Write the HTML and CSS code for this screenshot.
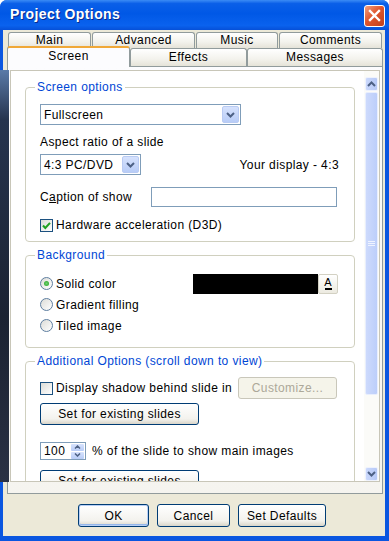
FILE: index.html
```html
<!DOCTYPE html>
<html>
<head>
<meta charset="utf-8">
<title>Project Options</title>
<link rel="stylesheet" href="styles.css">
</head>
<body>
<div class="window">
    <div class="titlebar">
        <span class="title">Project Options</span>
        <span class="close">
            <svg width="13" height="13" viewBox="0 0 13 13"><path d="M2 2 L11 11 M11 2 L2 11" stroke="#fff" stroke-width="2.4" stroke-linecap="square"/></svg>
        </span>
    </div>
    <div class="client">
        <div class="tabrow back">
            <div class="tab w-main">Main</div>
            <div class="tab w-adv">Advanced</div>
            <div class="tab w-music">Music</div>
            <div class="tab w-comm">Comments</div>
        </div>
        <div class="tabrow front">
            <div class="tab sel w-screen">Screen</div>
            <div class="tab w-eff">Effects</div>
            <div class="tab w-msg">Messages</div>
        </div>
        <div class="panel">
            <div class="scrollbox">
                <div class="scrollcontent">
                    <fieldset class="group">
                        <legend>Screen options</legend>
                        <div class="gbody g1">
                            <div class="combo wide">
                                <span class="ctext">Fullscreen</span>
                                <span class="dbtn"><svg width="9" height="6" viewBox="0 0 9 6"><path d="M1 1 L4.5 4.5 L8 1" fill="none" stroke="#4d6185" stroke-width="2"/></svg></span>
                            </div>
                            <div class="lbl aspect">Aspect ratio of a slide</div>
                            <div class="row between r-aspect">
                                <div class="combo narrow">
                                    <span class="ctext">4:3 PC/DVD</span>
                                    <span class="dbtn"><svg width="9" height="6" viewBox="0 0 9 6"><path d="M1 1 L4.5 4.5 L8 1" fill="none" stroke="#4d6185" stroke-width="2"/></svg></span>
                                </div>
                                <span>Your display - 4:3</span>
                            </div>
                            <div class="row r-caption">
                                <span class="caplbl">C<u>a</u>ption of show</span>
                                <span class="edit"></span>
                            </div>
                            <div class="row r-check">
                                <span class="check"><svg width="11" height="11" viewBox="0 0 11 11"><path d="M2 5.5 L4.3 8 L9 2.8" fill="none" stroke="#21a121" stroke-width="2"/></svg></span>
                                <span class="clabel">Hardware acceleration (D3D)</span>
                            </div>
                        </div>
                    </fieldset>

                    <fieldset class="group gap">
                        <legend>Background</legend>
                        <div class="gbody g2">
                            <div class="row between rrow">
                                <div class="row">
                                    <span class="radio on"></span>
                                    <span class="clabel">Solid color</span>
                                </div>
                                <div class="row picker">
                                    <span class="swatch"></span>
                                    <span class="abtn"><span class="aglyph">A</span><span class="abar"></span></span>
                                </div>
                            </div>
                            <div class="row rrow">
                                <span class="radio"></span>
                                <span class="clabel">Gradient filling</span>
                            </div>
                            <div class="row rrow">
                                <span class="radio"></span>
                                <span class="clabel">Tiled image</span>
                            </div>
                        </div>
                    </fieldset>

                    <fieldset class="group gap">
                        <legend>Additional Options (scroll down to view)</legend>
                        <div class="gbody g3">
                            <div class="row r-shadow">
                                <span class="check"></span>
                                <span class="clabel">Display shadow behind slide in</span>
                                <span class="btn disabled custom">Customize...</span>
                            </div>
                            <div class="btn setbtn first">Set for existing slides</div>
                            <div class="row r-spin">
                                <span class="spin">
                                    <span class="stext">100</span>
                                    <span class="sbtns">
                                        <span class="sb"><svg width="7" height="4" viewBox="0 0 7 4"><path d="M1 3.5 L3.5 1 L6 3.5" fill="none" stroke="#4d6185" stroke-width="1.5"/></svg></span>
                                        <span class="sb"><svg width="7" height="4" viewBox="0 0 7 4"><path d="M1 0.5 L3.5 3 L6 0.5" fill="none" stroke="#4d6185" stroke-width="1.5"/></svg></span>
                                    </span>
                                </span>
                                <span class="pct">% of the slide to show main images</span>
                            </div>
                            <div class="btn setbtn second">Set for existing slides</div>
                        </div>
                    </fieldset>
                </div>
                <div class="scrollbar">
                    <div class="sbtn"><svg width="9" height="6" viewBox="0 0 9 6"><path d="M1 5 L4.5 1.5 L8 5" fill="none" stroke="#4d6185" stroke-width="2"/></svg></div>
                    <div class="thumb">
                        <svg width="7" height="7" viewBox="0 0 7 7"><path d="M0 1.5 H7 M0 3.5 H7 M0 5.5 H7" stroke="#eef3ff" stroke-width="1"/></svg>
                    </div>
                    <div class="track"></div>
                    <div class="sbtn"><svg width="9" height="6" viewBox="0 0 9 6"><path d="M1 1 L4.5 4.5 L8 1" fill="none" stroke="#4d6185" stroke-width="2"/></svg></div>
                </div>
            </div>
        </div>
        <div class="buttons">
            <span class="btn default w-ok">OK</span>
            <span class="btn w-cancel">Cancel</span>
            <span class="btn w-def">Set Defaults</span>
        </div>
    </div>
</div>
</body>
</html>
```

FILE: styles.css
```css
body {
    margin: 0;
    font-family: "Liberation Sans", Arial, sans-serif;
    font-size: 12px;
    letter-spacing: 0.4px;
    color: #000;
    background: #fff;
}

.window {
    position: relative;
    width: 389px;
    height: 541px;
    display: flex;
    flex-direction: column;
    background: #0a56e0;
    border-radius: 7px 7px 0 0;
    overflow: hidden;
}

/* dark strip on the left edge of the shot */
.window::before {
    content: "";
    position: absolute;
    left: 0;
    top: 70px;
    width: 9px;
    height: 412px;
    background: linear-gradient(#5a7aa8, #26344f 12%, #1b2232 60%, #2a3144);
}

.titlebar {
    height: 30px;
    display: flex;
    align-items: center;
    justify-content: space-between;
    padding: 0 4px 0 10px;
    box-sizing: border-box;
    background: linear-gradient(#3b8cf5 0%, #0a5fe8 12%, #0058e6 45%, #0a62ee 85%, #0650d8 100%);
}

.title {
    color: #fff;
    font-weight: bold;
    font-size: 14px;
    letter-spacing: 0.4px;
    text-shadow: 1px 1px #0b2a8a;
    margin-top: -2px;
}

.close {
    width: 19px;
    height: 20px;
    border: 1px solid #fff;
    border-radius: 3px;
    display: flex;
    align-items: center;
    justify-content: center;
    background: linear-gradient(135deg, #f0a080, #e0562e 45%, #c0401c);
    margin-top: 1px;
}

.client {
    flex: 1;
    margin: 0 4px 5px 3px;
    padding-top: 2px;
    background: #ece9d8;
    display: flex;
    flex-direction: column;
}

.tabrow {
    display: flex;
}

.tabrow.back {
    margin-left: 5px;
    height: 16px;
    gap: 1px;
}

.tabrow.front {
    margin-left: 4px;
    height: 18px;
    align-items: flex-end;
}

.tab {
    box-sizing: border-box;
    height: 100%;
    border: 1px solid #919b9c;
    border-bottom: none;
    border-radius: 3px 3px 0 0;
    background: linear-gradient(#ffffff, #f3f2ec 60%, #e5e3d8);
    text-align: center;
    line-height: 15px;
}

.tabrow.front .tab {
    line-height: 17px;
}

.tabrow.front .tab.sel {
    position: relative;
    z-index: 1;
    height: 21px;
    margin-bottom: -1px;
    border-top: 2px solid #f0a838;
    background: #fcfcfe;
    line-height: 16px;
}

.w-main { width: 83px; }
.w-adv { width: 103px; }
.w-music { width: 82px; }
.w-comm { width: 103px; }
.w-screen { width: 123px; }
.w-eff { width: 117px; }
.w-msg { width: 136px; }

.panel {
    margin-left: 4px;
    width: 376px;
    height: 428px;
    box-sizing: border-box;
    border: 1px solid #919b9c;
    background: linear-gradient(#fcfcfe, #f5f4ef);
}

.scrollbox {
    display: flex;
    width: 370px;
    height: 412px;
    margin: 3px 0 0 2px;
    box-sizing: border-box;
    border: 1px solid #c8c6b8;
    background: #fff;
    overflow: hidden;
}

.scrollcontent {
    width: 353px;
    padding: 9px 0 0 14px;
    box-sizing: border-box;
    overflow: hidden;
}

.group {
    margin: 0;
    padding: 0;
    width: 330px;
    box-sizing: border-box;
    border: 1px solid #d0d0bf;
    border-radius: 4px;
}

.group.gap {
    margin-top: 6px;
}

.group legend {
    margin-left: 9px;
    padding: 0 2px;
    color: #0046d5;
    line-height: 14px;
}

.gbody {
    padding: 10px 15px 9px 14px;
}

.g2 {
    padding-top: 11px;
    padding-bottom: 11px;
}

.g3 {
    padding-top: 9px;
}

.row {
    display: flex;
    align-items: center;
}

.between {
    justify-content: space-between;
}

.combo {
    display: flex;
    align-items: center;
    justify-content: space-between;
    height: 21px;
    box-sizing: border-box;
    border: 1px solid #7f9db9;
    background: #fff;
}

.combo.wide { width: 201px; }
.combo.narrow { width: 101px; }

.ctext {
    padding-left: 3px;
}

.dbtn {
    width: 15px;
    height: 15px;
    margin-right: 1px;
    border: 1px solid #b9cbf3;
    border-radius: 2px;
    background: linear-gradient(#d6e2fd, #b8ccf7);
    display: flex;
    align-items: center;
    justify-content: center;
}

.lbl {
    line-height: 14px;
}

.aspect { margin-top: 10px; }
.r-aspect { margin-top: 5px; }
.r-caption { margin-top: 12px; }
.r-check { margin-top: 11px; height: 14px; }

.caplbl {
    width: 111px;
}

.edit {
    width: 186px;
    height: 20px;
    box-sizing: border-box;
    border: 1px solid #7f9db9;
    background: #fff;
}

.check {
    width: 13px;
    height: 13px;
    box-sizing: border-box;
    border: 1px solid #1c5180;
    background: linear-gradient(135deg, #dcdcd7, #fff);
    display: flex;
    align-items: center;
    justify-content: center;
    flex: none;
}

.clabel {
    margin-left: 3px;
}

.rrow {
    height: 21px;
}

.radio {
    width: 13px;
    height: 13px;
    box-sizing: border-box;
    border: 1px solid #5e7ea0;
    border-radius: 50%;
    background: linear-gradient(135deg, #dcdcd7, #fff);
    display: flex;
    align-items: center;
    justify-content: center;
    flex: none;
}

.radio.on::after {
    content: "";
    width: 5px;
    height: 5px;
    border-radius: 50%;
    background: radial-gradient(#6fd06f, #21a121);
}

.picker {
    margin-right: 1px;
}

.swatch {
    width: 125px;
    height: 20px;
    background: #000;
}

.abtn {
    width: 20px;
    height: 20px;
    box-sizing: border-box;
    border: 1px solid #d3d1c3;
    border-radius: 2px;
    background: linear-gradient(#fff, #eceae0);
    display: flex;
    flex-direction: column;
    align-items: center;
    justify-content: center;
}

.aglyph {
    font-size: 11px;
    line-height: 10px;
    letter-spacing: 0;
}

.abar {
    width: 7px;
    height: 2px;
    margin-top: 1px;
    background: #000;
}

.btn {
    display: flex;
    align-items: center;
    justify-content: center;
    height: 23px;
    box-sizing: border-box;
    border: 1px solid #003c74;
    border-radius: 3px;
    background: linear-gradient(#ffffff, #f3f2ed 75%, #d9d5c9);
}

.btn.disabled {
    border-color: #c9c7ba;
    background: #f5f4ea;
    color: #aca899;
}

.custom {
    width: 99px;
    height: 22px;
    margin-left: auto;
    margin-right: 2px;
}

.r-shadow {
    height: 22px;
}

.setbtn {
    width: 159px;
    height: 22px;
}

.setbtn.first { margin-top: 4px; }
.setbtn.second { margin-top: 10px; }

.r-spin {
    margin-top: 17px;
}

.spin {
    display: flex;
    align-items: center;
    justify-content: space-between;
    width: 46px;
    height: 18px;
    box-sizing: border-box;
    border: 1px solid #7f9db9;
    background: #fff;
}

.stext {
    padding-left: 3px;
}

.sbtns {
    display: flex;
    flex-direction: column;
    gap: 1px;
    margin-right: 1px;
}

.sb {
    width: 13px;
    height: 7px;
    border-radius: 1px;
    background: linear-gradient(#d6e2fd, #b8ccf7);
    display: flex;
    align-items: center;
    justify-content: center;
}

.pct {
    margin-left: 6px;
}

.scrollbar {
    width: 15px;
    display: flex;
    flex-direction: column;
    padding-top: 6px;
    box-sizing: border-box;
    background: #fbfbf8;
}

.sbtn {
    height: 14px;
    margin: 0 1px;
    box-sizing: border-box;
    border: 1px solid #eef2fd;
    border-radius: 2px;
    background: linear-gradient(to right, #cbd9fc, #b6c9f7);
    display: flex;
    align-items: center;
    justify-content: center;
}

.thumb {
    height: 303px;
    margin: 1px 1px 0;
    box-sizing: border-box;
    border: 1px solid #e8eefd;
    border-radius: 2px;
    background: linear-gradient(to right, #cddafc, #bccefa);
    display: flex;
    align-items: center;
    justify-content: center;
}

.track {
    flex: 1;
}

.buttons {
    display: flex;
    gap: 8px;
    margin-top: 10px;
    padding-left: 75px;
}

.btn.default {
    box-shadow: inset 0 0 0 1px #b8cff5, inset 0 -1px 0 1px #94b6ea;
}

.w-ok { width: 71px; }
.w-cancel { width: 73px; }
.w-def { width: 88px; }
```
